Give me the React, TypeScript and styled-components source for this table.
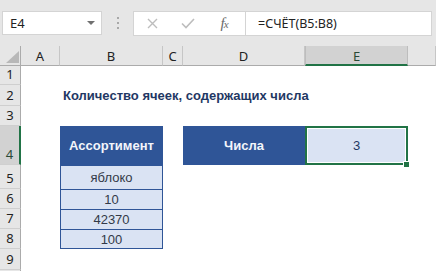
import styled, { createGlobalStyle } from "styled-components";

const GlobalStyle = createGlobalStyle`
  html, body {
    margin: 0;
    padding: 0;
    background: #fff;
  }
  body {
    width: 436px;
    height: 271px;
    overflow: hidden;
    font-family: "Liberation Sans", Arial, sans-serif;
  }
`;

const ui = `"Noto Sans", "Open Sans", sans-serif`;
const green = "#217346";
const blue = "#2f5597";
const paleBlue = "#dae3f3";
const navy = "#1f3864";

const columns = ["A", "B", "C", "D", "E", ""];
const items = ["яблоко", "10", "42370", "100"];

export default function App() {
  return (
    <>
      <GlobalStyle />
      <Window>
        <FormulaBar>
          <NameBox>
            E4
            <Caret />
          </NameBox>
          <Grip>
            <span />
            <span />
            <span />
          </Grip>
          <FormulaBox>
            <ButtonStrip>
              <Slot>
                <svg width="11" height="11" viewBox="0 0 11 11">
                  <path d="M1 1 L10 10 M10 1 L1 10" stroke="#bdbdbd" strokeWidth="1.4" fill="none" />
                </svg>
              </Slot>
              <Slot>
                <svg width="14" height="11" viewBox="0 0 14 11">
                  <path d="M1 5.5 L5 9.5 L13 1" stroke="#bdbdbd" strokeWidth="1.6" fill="none" />
                </svg>
              </Slot>
              <Slot>
                <Fx>
                  f<small>x</small>
                </Fx>
              </Slot>
            </ButtonStrip>
            <FormulaText>=СЧЁТ(B5:B8)</FormulaText>
          </FormulaBox>
        </FormulaBar>

        <Sheet>
          <Corner>
            <svg width="13" height="12" viewBox="0 0 13 12">
              <polygon points="13,0 13,12 0,12" fill="#b8b8b8" />
            </svg>
          </Corner>
          {columns.map((c, i) => (
            <ColHead key={i} $col={i + 2} $active={c === "E"}>
              {c}
            </ColHead>
          ))}
          {/* row 10 only peeks in at the bottom edge, so it gets no number */}
          {Array.from({ length: 10 }, (_, i) => (
            <RowHead key={i} $row={i + 2} $active={i + 1 === 4}>
              {i < 9 ? i + 1 : null}
            </RowHead>
          ))}

          <Title $row={3} $col={3}>Количество ячеек, содержащих числа</Title>

          <HeaderCell $row={5} $col={3}>Ассортимент</HeaderCell>
          {items.map((v, i) => (
            <DataCell key={v} $row={i + 6} $col={3} $last={i === items.length - 1}>
              {v}
            </DataCell>
          ))}

          <HeaderCell $row={5} $col={5}>Числа</HeaderCell>
          <ResultCell $row={5} $col={6}>
            3
            <FillHandle />
          </ResultCell>
        </Sheet>
      </Window>
    </>
  );
}

const Window = styled.div`
  width: 436px;
  height: 271px;
  display: flex;
  flex-direction: column;
  background: #fff;
  overflow: hidden;
`;

const FormulaBar = styled.div`
  height: 46px;
  flex: none;
  background: #e6e6e6;
  display: flex;
  align-items: center;
  padding-left: 2px;
  box-sizing: border-box;
`;

const NameBox = styled.div`
  width: 100px;
  height: 24px;
  box-sizing: border-box;
  background: #fff;
  border: 1px solid #d4d4d4;
  display: flex;
  align-items: center;
  justify-content: space-between;
  padding: 0 6px 0 7px;
  font: 13px ${ui};
  color: #222;
`;

const Caret = styled.span`
  width: 0;
  height: 0;
  border-left: 4px solid transparent;
  border-right: 4px solid transparent;
  border-top: 4px solid #707070;
`;

const Grip = styled.div`
  width: 2px;
  margin: 0 14px 0 15px;
  display: flex;
  flex-direction: column;
  gap: 3px;

  span {
    width: 2px;
    height: 2px;
    background: #a8a8a8;
  }
`;

const FormulaBox = styled.div`
  width: 299px;
  height: 25px;
  box-sizing: border-box;
  background: #fff;
  border: 1px solid #d4d4d4;
  display: flex;
`;

const ButtonStrip = styled.div`
  width: 111px;
  flex: none;
  display: flex;
  border-right: 1px solid #d4d4d4;
`;

const Slot = styled.div`
  width: 36px;
  display: flex;
  align-items: center;
  justify-content: center;
`;

const Fx = styled.span`
  font: italic 15px "Liberation Serif", serif;
  color: #6a6a6a;
  letter-spacing: -1px;

  small {
    font-size: 11px;
  }
`;

const FormulaText = styled.div`
  flex: 1;
  display: flex;
  align-items: center;
  padding-left: 12px;
  font: 12.5px ${ui};
  color: #222;
`;

const Sheet = styled.div`
  flex: 1;
  display: grid;
  grid-template-columns: 21px 39px 103px 20px 122px 103px 1fr;
  grid-template-rows: 20px 19px 21px 20px 39px 24px 20px 20px 20px 21px 1fr;
`;

type Place = { $row: number; $col: number };

const Corner = styled.div`
  grid-row: 1;
  grid-column: 1;
  background: #e6e6e6;
  border-right: 1px solid #ababab;
  border-bottom: 1px solid #ababab;
  display: flex;
  align-items: flex-end;
  justify-content: flex-end;
  padding: 0 1px 2px 0;
`;

const ColHead = styled.div<{ $col: number; $active?: boolean }>`
  grid-row: 1;
  grid-column: ${(p) => p.$col};
  background: ${(p) => (p.$active ? "#d2d2d2" : "#e6e6e6")};
  border-right: 1px solid ${(p) => (p.$active ? "#bdbdbd" : "#c6c6c6")};
  border-left: ${(p) => (p.$active ? "1px solid #bdbdbd" : "none")};
  border-bottom: ${(p) => (p.$active ? `2px solid ${green}` : "1px solid #ababab")};
  display: flex;
  align-items: center;
  justify-content: center;
  font: 13px ${ui};
  color: ${(p) => (p.$active ? "#2a4a36" : "#222")};
  padding-top: 1px;
`;

const RowHead = styled.div<{ $row: number; $active?: boolean }>`
  grid-column: 1;
  grid-row: ${(p) => p.$row};
  background: ${(p) => (p.$active ? "#d2d2d2" : "#e6e6e6")};
  border-right: ${(p) => (p.$active ? `2px solid ${green}` : "1px solid #ababab")};
  border-bottom: 1px solid #cfcfcf;
  display: flex;
  align-items: flex-end;
  justify-content: center;
  padding-bottom: 1px;
  font: 13px/17px ${ui};
  color: ${(p) => (p.$active ? "#2a4a36" : "#222")};
  overflow: hidden;
`;

const Cell = styled.div<Place>`
  grid-row: ${(p) => p.$row};
  grid-column: ${(p) => p.$col};
  display: flex;
  align-items: center;
  justify-content: center;
  font-size: 13px;
  white-space: nowrap;
`;

const Title = styled(Cell)`
  grid-column: ${(p) => p.$col} / span 4;
  justify-content: flex-start;
  align-items: flex-end;
  padding: 0 0 3px 3px;
  font-weight: bold;
  color: ${navy};
`;

const HeaderCell = styled(Cell)`
  background: ${blue};
  color: #f3f5fb;
  font-weight: bold;
`;

const DataCell = styled(Cell)<{ $last?: boolean }>`
  background: ${paleBlue};
  border: 1px solid ${blue};
  border-bottom: ${(p) => (p.$last ? `1px solid ${blue}` : "none")};
  color: #333a48;
`;

const ResultCell = styled(Cell)`
  position: relative;
  background: ${paleBlue};
  border: 2px solid ${green};
  box-shadow: inset 0 0 0 1px #fff;
  color: ${navy};
`;

const FillHandle = styled.span`
  position: absolute;
  right: -4px;
  bottom: -5px;
  width: 5px;
  height: 5px;
  background: ${green};
  border: 1px solid #fff;
`;
